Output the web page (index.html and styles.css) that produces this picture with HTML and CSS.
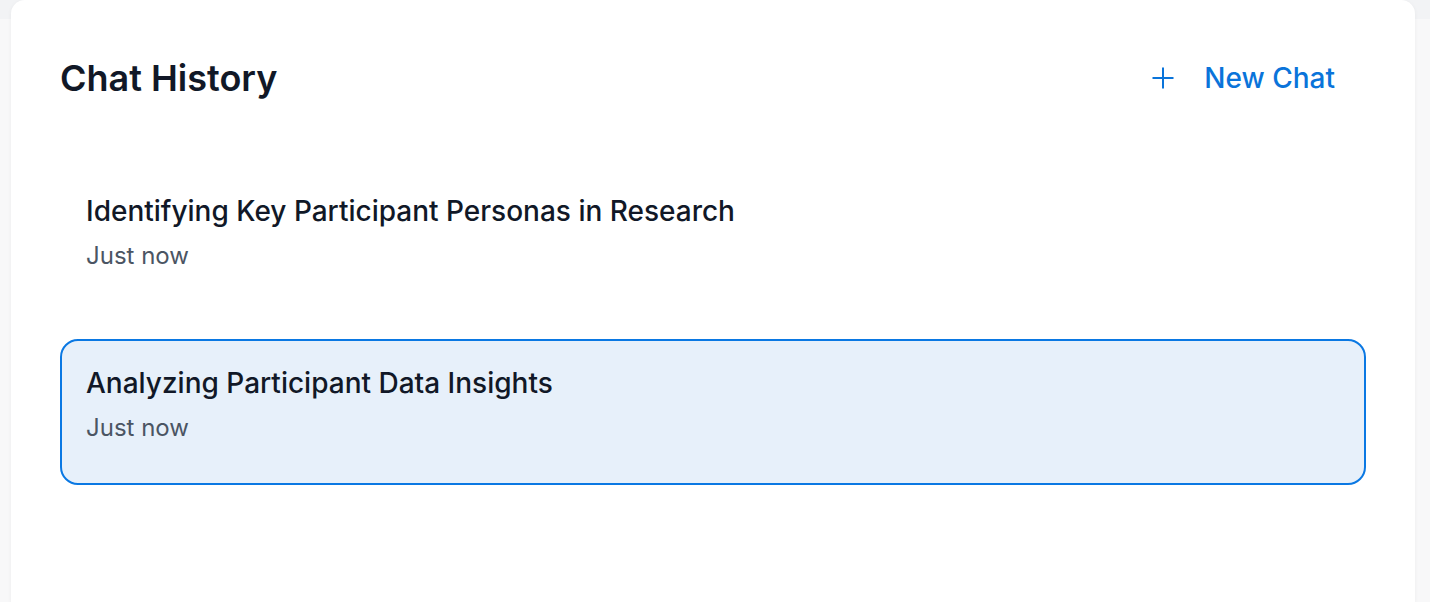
FILE: index.html
```html
<!DOCTYPE html>
<html lang="en">
<head>
<meta charset="utf-8">
<title>Chat History</title>
<link rel="stylesheet" href="styles.css">
</head>
<body>
<div class="page">
  <section class="card">
    <header class="card-header">
      <h1 class="title">Chat History</h1>
      <button class="new-chat" type="button">
        <svg class="plus" width="24" height="24" viewBox="0 0 24 24" fill="none" stroke="currentColor" stroke-width="2" stroke-linecap="butt">
          <path d="M12 1.5v21M1.5 12h21"/>
        </svg>
        <span>New Chat</span>
      </button>
    </header>
    <ul class="chat-list">
      <li class="chat-item">
        <div class="chat-title">Identifying Key Participant Personas in Research</div>
        <div class="chat-time">Just now</div>
      </li>
      <li class="chat-item active">
        <div class="chat-title">Analyzing Participant Data Insights</div>
        <div class="chat-time">Just now</div>
      </li>
    </ul>
  </section>
</div>
</body>
</html>
```

FILE: styles.css
```css
* { box-sizing: border-box; }

html, body {
  margin: 0;
  padding: 0;
  height: 100%;
  overflow: hidden;
}

body {
  font-family: Inter, "Noto Sans", sans-serif;
  background: linear-gradient(to bottom, #f2f3f5 0, #f2f3f5 19px, #f8f8f9 19px);
}

.page {
  padding: 0 15px 0 11px;
  height: 100%;
}

.card {
  background: #ffffff;
  border-radius: 14px 14px 0 0;
  box-shadow: 0 1px 4px rgba(17, 24, 39, 0.05);
  height: 100%;
  padding: 38px 49px 0;
}

.card-header {
  display: flex;
  align-items: center;
  justify-content: space-between;
  height: 80px;
}

.title {
  margin: 0;
  font-size: 36px;
  font-weight: 600;
  color: #111827;
  line-height: 44px;
}

.new-chat {
  display: flex;
  align-items: center;
  gap: 29px;
  border: 0;
  background: transparent;
  color: #0a74da;
  font-family: inherit;
  font-size: 28px;
  font-weight: 500;
  line-height: 36px;
  padding: 8px 31px 8px 0;
  cursor: pointer;
}

.plus { display: block; }

.chat-list {
  list-style: none;
  margin: 0;
  padding: 49px 0 0;
  display: flex;
  flex-direction: column;
  gap: 26px;
}

.chat-item {
  border: 2px solid transparent;
  border-radius: 18px;
  padding: 24px 24px 39px;
}

.chat-item.active {
  background: #e7f0fa;
  border-color: #0a78e3;
}

.chat-title {
  font-size: 28px;
  font-weight: 500;
  color: #111827;
  line-height: 36px;
}

.chat-time {
  margin-top: 11px;
  font-size: 24px;
  color: #4b5563;
  line-height: 32px;
}
```
